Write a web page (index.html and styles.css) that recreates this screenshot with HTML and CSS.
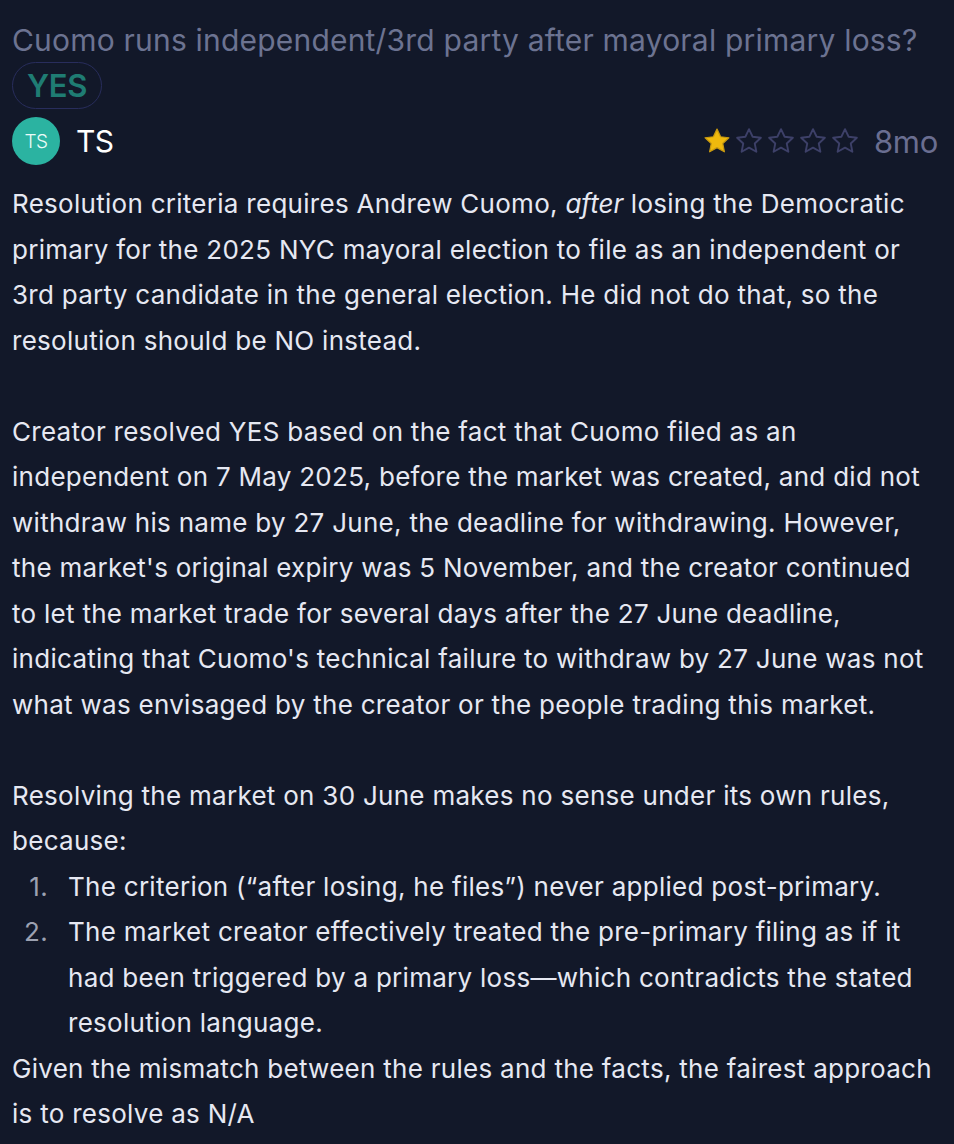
FILE: index.html
```html
<!DOCTYPE html>
<html lang="en">
<head>
<meta charset="utf-8">
<title>Review</title>
<link rel="stylesheet" href="styles.css">
</head>
<body>
<div class="page">
  <div class="title">Cuomo runs independent/3rd party after mayoral primary loss?</div>
  <div class="badge-row"><span class="badge">YES</span></div>
  <div class="author-row">
    <div class="author">
      <div class="avatar">TS</div>
      <div class="name">TS</div>
    </div>
    <div class="meta">
      <div class="stars">
        <svg class="star" viewBox="0 0 24 24"><path class="full" d="M12 2.5l2.9 6.1 6.6.8-4.9 4.6 1.3 6.6L12 17.3l-5.9 3.3 1.3-6.6-4.9-4.6 6.6-.8z"/></svg>
        <svg class="star" viewBox="0 0 24 24"><path class="empty" d="M12 2.5l2.9 6.1 6.6.8-4.9 4.6 1.3 6.6L12 17.3l-5.9 3.3 1.3-6.6-4.9-4.6 6.6-.8z"/></svg>
        <svg class="star" viewBox="0 0 24 24"><path class="empty" d="M12 2.5l2.9 6.1 6.6.8-4.9 4.6 1.3 6.6L12 17.3l-5.9 3.3 1.3-6.6-4.9-4.6 6.6-.8z"/></svg>
        <svg class="star" viewBox="0 0 24 24"><path class="empty" d="M12 2.5l2.9 6.1 6.6.8-4.9 4.6 1.3 6.6L12 17.3l-5.9 3.3 1.3-6.6-4.9-4.6 6.6-.8z"/></svg>
        <svg class="star" viewBox="0 0 24 24"><path class="empty" d="M12 2.5l2.9 6.1 6.6.8-4.9 4.6 1.3 6.6L12 17.3l-5.9 3.3 1.3-6.6-4.9-4.6 6.6-.8z"/></svg>
      </div>
      <span class="time">8mo</span>
    </div>
  </div>
  <div class="content">
    <p>Resolution criteria requires Andrew Cuomo, <em>after</em> losing the Democratic primary for the 2025 NYC mayoral election to file as an independent or 3rd party candidate in the general election. He did not do that, so the resolution should be NO instead.</p>
    <p>Creator resolved YES based on the fact that Cuomo filed as an independent on 7 May 2025, before the market was created, and did not withdraw his name by 27 June, the deadline for withdrawing. However, the market's original expiry was 5 November, and the creator continued to let the market trade for several days after the 27 June deadline, indicating that Cuomo's technical failure to withdraw by 27 June was not what was envisaged by the creator or the people trading this market.</p>
    <p class="tight">Resolving the market on 30 June makes no sense under its own rules, because:</p>
    <ol>
      <li>The criterion (“after losing, he files”) never applied post-primary.</li>
      <li>The market creator effectively treated the pre-primary filing as if it had been triggered by a primary loss—which contradicts the stated resolution language.</li>
    </ol>
    <p class="tight">Given the mismatch between the rules and the facts, the fairest approach is to resolve as N/A</p>
  </div>
</div>
</body>
</html>
```

FILE: styles.css
```css
html, body {
  margin: 0;
  padding: 0;
  background: #121829;
}

body {
  font-family: Inter, "Noto Sans", sans-serif;
  color: #e6e8f2;
}

.page {
  padding: 20px 16px 0 12px;
}

.title {
  font-size: 30px;
  line-height: 40px;
  color: #6c7391;
  letter-spacing: 0.2px;
  white-space: nowrap;
}

.badge-row {
  display: flex;
  margin-top: 2px;
}

.badge {
  display: inline-flex;
  align-items: center;
  justify-content: center;
  width: 88px;
  height: 45px;
  border: 1px solid #282d5c;
  border-radius: 24px;
  font-size: 31px;
  font-weight: 600;
  color: #1f7c73;
  letter-spacing: -0.3px;
}

.author-row {
  display: flex;
  align-items: center;
  justify-content: space-between;
  margin-top: 8px;
}

.author {
  display: flex;
  align-items: center;
  gap: 16px;
}

.avatar {
  width: 48px;
  height: 48px;
  border-radius: 50%;
  background: #2bb3a1;
  color: #e9fbf8;
  font-size: 19px;
  font-weight: 300;
  display: flex;
  align-items: center;
  justify-content: center;
  letter-spacing: -0.5px;
}

.name {
  font-size: 30px;
  color: #ffffff;
  letter-spacing: -0.5px;
}

.meta {
  display: flex;
  align-items: center;
  gap: 14px;
}

.stars {
  display: flex;
  gap: 2px;
}

.star {
  width: 30px;
  height: 30px;
  display: block;
}

.star .full {
  fill: #efb90d;
  stroke: #c99a10;
  stroke-width: 1;
  stroke-linejoin: round;
}

.star .empty {
  fill: none;
  stroke: #3d4068;
  stroke-width: 1.5;
  stroke-linejoin: round;
}

.time {
  font-size: 31px;
  color: #6a6e91;
  letter-spacing: -0.3px;
}

.content {
  margin-top: 16px;
  font-size: 26px;
  line-height: 45.5px;
  letter-spacing: 0.28px;
}

.content em {
  letter-spacing: 0;
}

.content p {
  margin: 0 0 45.5px 0;
}

.content p.tight {
  margin: 0;
}

.content ol {
  margin: 0;
  padding: 0;
  list-style: none;
  counter-reset: item;
}

.content li {
  counter-increment: item;
  display: grid;
  grid-template-columns: 36px 1fr;
  column-gap: 20px;
}

.content li::before {
  content: counter(item) ".";
  text-align: right;
  color: #9ca1b1;
}
```
